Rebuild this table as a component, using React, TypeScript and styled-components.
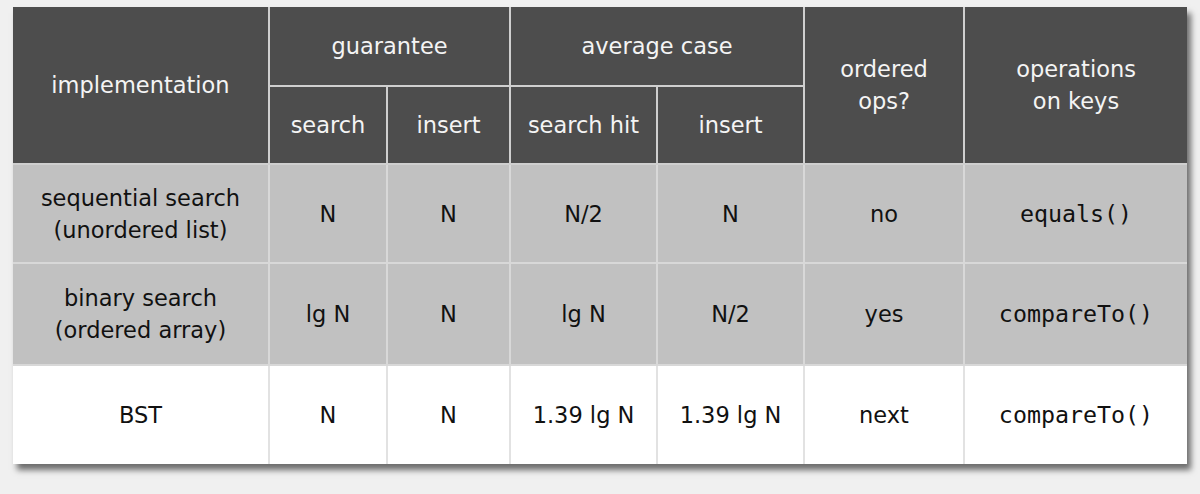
import React from 'react'
import styled, {createGlobalStyle} from 'styled-components'

const GlobalStyle = createGlobalStyle`
  html, body {
    margin: 0;
    padding: 0;
    background: #f0f0f0;
  }
`

type Row = {
  name: string[]
  cells: string[]
  keys: string
  tone: 'gray' | 'white'
  h: number
}

const rows: Row[] = [
  {name: ['sequential search', '(unordered list)'], cells: ['N', 'N', 'N/2', 'N', 'no'], keys: 'equals()', tone: 'gray', h: 97},
  {name: ['binary search', '(ordered array)'], cells: ['lg N', 'N', 'lg N', 'N/2', 'yes'], keys: 'compareTo()', tone: 'gray', h: 100},
  {name: ['BST'], cells: ['N', 'N', '1.39 lg N', '1.39 lg N', 'next'], keys: 'compareTo()', tone: 'white', h: 98},
]

const widths = [256, 118, 123, 147, 147, 160, 223]

const App = () => {
  return (
    <Page>
      <GlobalStyle />
      <Table>
        <colgroup>
          {widths.map((w, i) => <col key={i} style={{width: w}} />)}
        </colgroup>
        <thead>
          <tr>
            <Head rowSpan={2}>implementation</Head>
            <Head colSpan={2} $h={78}>guarantee</Head>
            <Head colSpan={2}>average case</Head>
            <Head rowSpan={2}>ordered<br />ops?</Head>
            <Head rowSpan={2}>operations<br />on keys</Head>
          </tr>
          <tr>
            <Head $h={76}>search</Head>
            <Head>insert</Head>
            <Head>search hit</Head>
            <Head>insert</Head>
          </tr>
        </thead>
        <tbody>
          {rows.map((r, i) => (
            <tr key={i}>
              <Cell $tone={r.tone} $h={r.h}>
                {r.name.map((n, j) => <Line key={j}>{n}</Line>)}
              </Cell>
              {r.cells.map((c, j) => (
                <Cell key={j} $tone={r.tone}>{c}</Cell>
              ))}
              <Cell $tone={r.tone} $mono>{r.keys}</Cell>
            </tr>
          ))}
        </tbody>
      </Table>
    </Page>
  )
}

export default App

const Page = styled.div`
  width: 1200px;
  height: 494px;
  padding: 7px 0 0 13px;
  box-sizing: border-box;
  background: #f0f0f0;
`

const Table = styled.table`
  width: 1174px;
  table-layout: fixed;
  border-collapse: collapse;
  box-shadow: 4px 6px 6px rgba(0, 0, 0, 0.55);
  font-family: "DejaVu Sans", Verdana, sans-serif;
  font-size: 22.5px;
  line-height: 32px;
`

const Head = styled.th<{$h?: number}>`
  background: #4d4d4d;
  color: #f4f4f4;
  font-weight: normal;
  text-align: center;
  vertical-align: middle;
  padding: 0;
  height: ${p => (p.$h ? `${p.$h}px` : 'auto')};
  border: 2px solid #cfcfcf;
  border-top: none;
  &:first-child { border-left: none; }
  &:last-child { border-right: none; }
`

const Cell = styled.td<{$tone: 'gray' | 'white'; $mono?: boolean; $h?: number}>`
  background: ${p => (p.$tone === 'gray' ? '#c1c1c1' : '#ffffff')};
  color: #111;
  text-align: center;
  vertical-align: middle;
  padding: 0;
  height: ${p => (p.$h ? `${p.$h}px` : 'auto')};
  font-family: ${p => (p.$mono ? '"DejaVu Sans Mono", monospace' : 'inherit')};
  font-size: ${p => (p.$mono ? '23.3px' : 'inherit')};
  border: 2px solid ${p => (p.$tone === 'gray' ? '#d8d8d8' : '#e2e2e2')};
  &:first-child { border-left: none; }
  &:last-child { border-right: none; }
  tr:last-child > & { border-bottom: none; }
`

const Line = styled.div``
